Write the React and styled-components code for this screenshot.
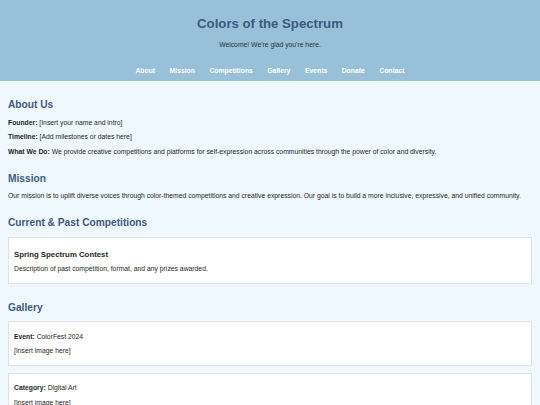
import styled, { createGlobalStyle } from "styled-components";

const GlobalStyle = createGlobalStyle`
  body {
    margin: 0;
    background-color: #f0f8ff;
    font-family: "Liberation Sans", Arial, sans-serif;
    font-size: 6.8px;
    line-height: 7.6px;
    color: #1f1f1f;
  }
`;

const Header = styled.header`
  background-color: #98c1d9;
  text-align: center;
  padding: 0 0 6.5px;
  overflow: hidden;

  h1 {
    color: #3d5a80;
    font-size: 13.2px;
    line-height: 15px;
    margin: 16px 0 9.5px;
  }

  p {
    margin: 0;
    color: #293241;
  }
`;

const Nav = styled.nav`
  display: flex;
  justify-content: center;
  gap: 14.5px;
  margin-top: 19px;
`;

const NavLink = styled.a`
  color: white;
  font-weight: bold;
  text-decoration: none;
`;

const Main = styled.main`
  padding: 10px 8px 8px;
`;

const Section = styled.section`
  margin-bottom: 17.5px;

  h2 {
    color: #3d5a80;
    font-size: 10.2px;
    line-height: 11.4px;
    margin: 8.3px 0 8px;
  }

  p {
    margin: 6.8px 0;
  }
`;

const Card = styled.div`
  background-color: white;
  border: 1px solid #dfe3e8;
  padding: 3.5px 5px;
  margin-bottom: 7px;

  h3 {
    font-size: 7.8px;
    line-height: 9px;
    margin: 8.5px 0 6.8px;
  }
`;

const links = ["About", "Mission", "Competitions", "Gallery", "Events", "Donate", "Contact"];

const gallery = [
  { label: "Event", value: "ColorFest 2024" },
  { label: "Category", value: "Digital Art" },
  { label: "Theme", value: "Shades of Blue" },
];

export default function App() {
  return (
    <>
      <GlobalStyle />
      <Header>
        <h1>Colors of the Spectrum</h1>
        <p>Welcome! We're glad you're here.</p>
        <Nav>
          {links.map((link) => (
            <NavLink key={link} href={`#${link.toLowerCase()}`}>
              {link}
            </NavLink>
          ))}
        </Nav>
      </Header>

      <Main>
        <Section id="about">
          <h2>About Us</h2>
          <p><strong>Founder:</strong> [Insert your name and intro]</p>
          <p><strong>Timeline:</strong> [Add milestones or dates here]</p>
          <p>
            <strong>What We Do:</strong> We provide creative competitions and platforms for
            self-expression across communities through the power of color and diversity.
          </p>
        </Section>

        <Section id="mission">
          <h2>Mission</h2>
          <p>
            Our mission is to uplift diverse voices through color-themed competitions and creative
            expression. Our goal is to build a more inclusive, expressive, and unified community.
          </p>
        </Section>

        <Section id="competitions">
          <h2>Current &amp; Past Competitions</h2>
          <Card>
            <h3>Spring Spectrum Contest</h3>
            <p>Description of past competition, format, and any prizes awarded.</p>
          </Card>
        </Section>

        <Section id="gallery">
          <h2>Gallery</h2>
          {gallery.map((item) => (
            <Card key={item.label}>
              <p><strong>{item.label}:</strong> {item.value}</p>
              <p>[Insert image here]</p>
            </Card>
          ))}
        </Section>

        <Section id="events">
          <h2>Events</h2>
          <p>[Upcoming events will be listed here]</p>
        </Section>
      </Main>
    </>
  );
}
